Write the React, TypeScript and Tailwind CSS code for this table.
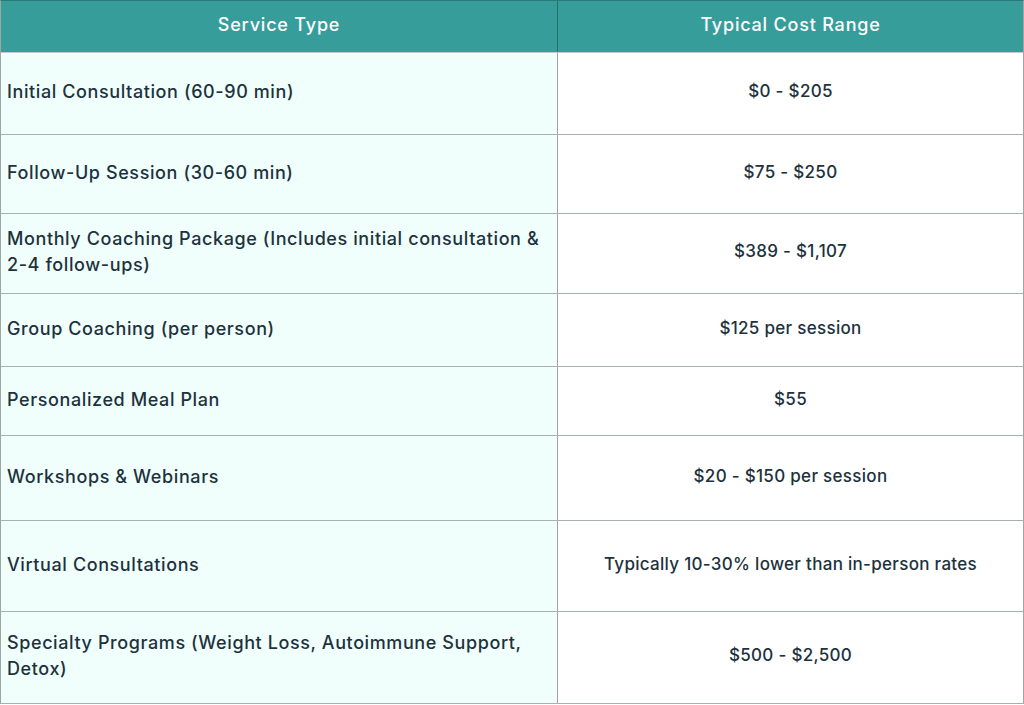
import React from 'react';

const rows = [
  { service: 'Initial Consultation (60-90 min)', cost: '$0 - $205', h: 'h-[82px]' },
  { service: 'Follow-Up Session (30-60 min)', cost: '$75 - $250', h: 'h-[79px]' },
  {
    service: 'Monthly Coaching Package (Includes initial consultation & 2-4 follow-ups)',
    cost: '$389 - $1,107',
    h: 'h-[80px]',
  },
  { service: 'Group Coaching (per person)', cost: '$125 per session', h: 'h-[73px]' },
  { service: 'Personalized Meal Plan', cost: '$55', h: 'h-[69px]' },
  { service: 'Workshops & Webinars', cost: '$20 - $150 per session', h: 'h-[85px]' },
  { service: 'Virtual Consultations', cost: 'Typically 10-30% lower than in-person rates', h: 'h-[91px]' },
  {
    service: 'Specialty Programs (Weight Loss, Autoimmune Support, Detox)',
    cost: '$500 - $2,500',
    h: 'h-[92px]',
  },
];

export default function App() {
  return (
    <div
      className="w-[1024px] bg-white font-medium text-[#1d323d]"
      style={{ fontFamily: 'Inter, "Noto Sans", sans-serif' }}
    >
      <div className="border-t border-l border-r border-t-[#2a7b78] border-l-[#9fa6a6] border-r-[#9fa6a6]">
        {/* header */}
        <div className="grid grid-cols-[557px_1fr] h-[52px] bg-[#379d9b] text-white text-[18px] tracking-[0.8px] border-b border-[#c4c8c8]">
          <div className="flex items-center justify-center pb-[4px] border-r border-[#266f6c]">Service Type</div>
          <div className="flex items-center justify-center pb-[4px]">Typical Cost Range</div>
        </div>

        {rows.map((row) => (
          <div key={row.service} className={`grid grid-cols-[557px_1fr] border-b border-[#aab0b0] ${row.h}`}>
            <div className="flex items-center bg-[#f0fffc] border-r border-[#9ea3a3] pl-[6px] pr-[4px] pb-[3px] text-[18px] tracking-[0.6px] leading-[26px]">
              {row.service}
            </div>
            <div className="flex items-center justify-center text-center px-3 pb-[3px] text-[17px] tracking-[0.3px]">
              {row.cost}
            </div>
          </div>
        ))}
      </div>
    </div>
  );
}
